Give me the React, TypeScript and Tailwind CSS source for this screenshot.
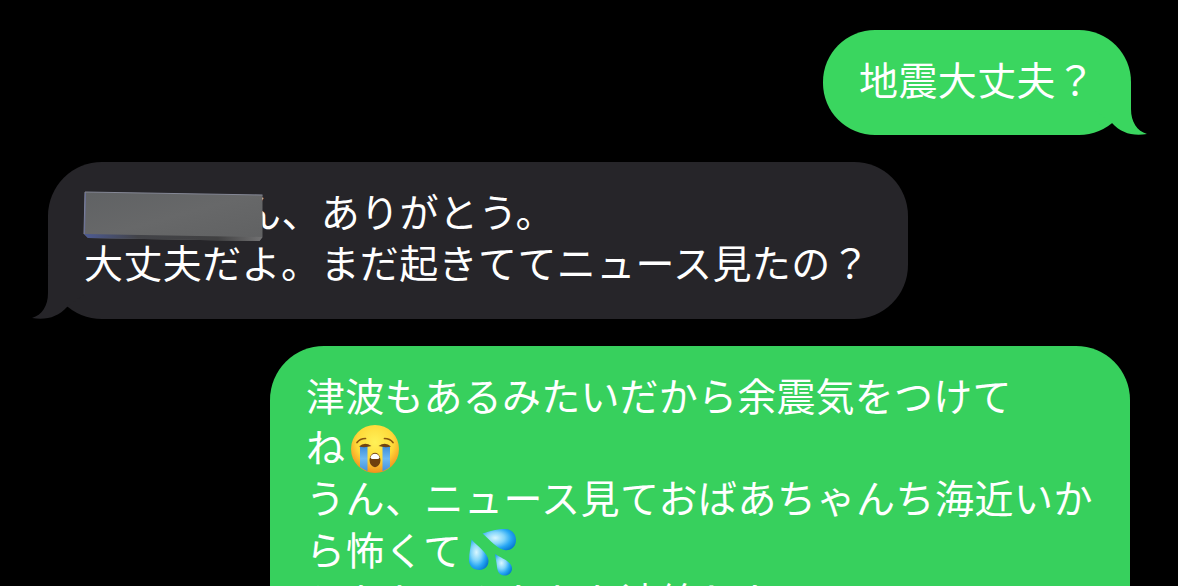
import React from 'react';

type Side = 'sent' | 'received';

interface BubbleProps {
  side: Side;
  tail?: boolean;
  className?: string;
  children: React.ReactNode;
}

const Tail = ({ side }: { side: Side }) => (
  <svg
    viewBox="0 0 54 53"
    className={`absolute bottom-0 w-[54px] h-[53px] ${side === 'sent' ? '-right-4 text-[#3ad65f]' : '-left-4 -scale-x-100 text-[#262529]'}`}
    fill="currentColor"
  >
    <path d="M0 0H38V27C38 40 44 49 54 52C40 54.500 28 51 19 41L0 27Z" />
  </svg>
);

const Line = ({ className = '', children }: { className?: string; children: React.ReactNode }) => (
  <div className={`flex items-center h-[51.2px] whitespace-nowrap ${className}`}>{children}</div>
);

const Bubble = ({ side, tail, className = '', children }: BubbleProps) => (
  <div className={`relative shrink-0 pl-9 text-white ${side === 'sent' ? 'self-end' : 'self-start'} ${className}`}>
    {tail && <Tail side={side} />}
    <div className="relative">{children}</div>
  </div>
);

const CryingFace = () => (
  <svg viewBox="0 0 50 50" className="w-[50px] h-[50px] ml-[5px] mt-[7px] shrink-0">
    <defs>
      <radialGradient id="face" cx="50%" cy="36%" r="64%">
        <stop offset="0" stopColor="#fff158" />
        <stop offset=".6" stopColor="#ffd939" />
        <stop offset="1" stopColor="#f18f1d" />
      </radialGradient>
      <linearGradient id="tear" x1="0" y1="0" x2="0" y2="1">
        <stop offset="0" stopColor="#3c8cda" />
        <stop offset=".5" stopColor="#6eb9f2" />
        <stop offset="1" stopColor="#4292dd" />
      </linearGradient>
    </defs>
    <circle cx="25" cy="25" r="24" fill="url(#face)" />
    <path d="M10 22H17.500V47.300Q13.500 45.500 10 43ZM32.500 22H40V43Q37 45.500 32.500 47.300Z" fill="url(#tear)" />
    <path d="M7 18.500Q10 14.500 15.500 14.500M34.500 14.500Q40 14.500 43 18.500" fill="none" stroke="#8a560f" strokeWidth="1.700" strokeLinecap="round" />
    <path d="M9 22.500Q14.500 17.500 21.500 22Q15 24 9 22.500ZM28.500 22Q35.500 17.500 41 22.500Q35 24 28.500 22Z" fill="#714413" />
    <ellipse cx="25" cy="36" rx="5.500" ry="7.200" fill="#70400e" />
    <path d="M20.500 33.500Q21.500 29.800 25 29.800T29.500 33.500Q29 35 27.500 35H22.500Q21 35 20.500 33.500Z" fill="#fff" />
  </svg>
);

const Droplets = () => (
  <svg viewBox="0 0 50 50" className="w-[50px] h-[50px] ml-[6px] mt-[9px] shrink-0">
    <defs>
      <radialGradient id="drop" cx="38%" cy="42%" r="68%">
        <stop offset="0" stopColor="#d9f7ff" />
        <stop offset=".4" stopColor="#83d5fa" />
        <stop offset=".7" stopColor="#27a7f4" />
        <stop offset="1" stopColor="#0779d2" />
      </radialGradient>
    </defs>
    <path d="M14.500 5.500C22 3 31 .8 37 1C44 1.200 48 6 48 12C48 18.500 43.500 22.500 37.500 22.200C29.500 21.500 22 12 14.500 5.500Z" fill="url(#drop)" />
    <path d="M3.500 11.500C9 18 20.500 25 20.500 33C20.500 38.500 16.500 42 11.500 42C5 42 1 38 1 32C1 25 3 18 3.500 11.500Z" fill="url(#drop)" />
    <path d="M27 26C33 30 44 33.500 44 40.500C44 44.500 41 47.500 36.500 47.500C31.500 47.500 29.500 43.500 29 39C28.600 34 27.500 30 27 26Z" fill="url(#drop)" />
  </svg>
);

// Slanted tape covering the name
const Redaction = () => (
  <svg viewBox="0 0 180 50" className="absolute -left-px top-[6px] w-[180px] h-[50px]">
    <defs>
      <linearGradient id="tape" x1="0" y1="0" x2="1" y2="1">
        <stop offset="0" stopColor="#606264" />
        <stop offset=".5" stopColor="#676869" />
        <stop offset="1" stopColor="#606162" />
      </linearGradient>
      <linearGradient id="tapeEdge" x1="0" y1="0" x2="1" y2="0">
        <stop offset="0" stopColor="#4d5b94" />
        <stop offset=".3" stopColor="#424348" />
        <stop offset=".75" stopColor="#414142" />
        <stop offset="1" stopColor="#727273" />
      </linearGradient>
    </defs>
    <path d="M2 1L179.500 4V46L176.500 50L5 47L1 43Z" fill="url(#tape)" />
    <path d="M1 43L179.500 46L176.500 50L5 47Z" fill="url(#tapeEdge)" />
    <path d="M1 43L2 1L179.500 4" fill="none" stroke="#858896" strokeWidth="1" />
    <path d="M1.500 43L2.500 2" fill="none" stroke="#6870a0" strokeWidth=".8" />
  </svg>
);

export default function App() {
  return (
    <main className="w-[1178px] h-[586px] overflow-hidden bg-black pt-[30px] px-12 flex flex-col gap-[27px] font-['Noto_Sans_CJK_JP',sans-serif] text-[39px] tracking-[0.4px] leading-[51px]">
      <Bubble side="sent" tail className="w-[308px] h-[105px] rounded-[52px] bg-[#3ad65f] pt-[23px] -mr-px">
        <Line>地震大丈夫？</Line>
      </Bubble>

      <Bubble side="received" tail className="w-[860px] h-[157px] rounded-[54px] bg-[#262529] pt-[23px]">
        <div className="relative pl-[158px]">
          <Line>ん、ありがとう。</Line>
          <Redaction />
        </div>
        <Line>大丈夫だよ。まだ起きててニュース見たの？</Line>
      </Bubble>

      <Bubble side="sent" className="w-[860px] h-[360px] rounded-[54px] bg-[#37d05d] pt-[23px]">
        <Line className="tracking-[0.2px]">津波もあるみたいだから余震気をつけて</Line>
        <Line>ね<CryingFace /></Line>
        <Line className="tracking-[0.5px]">うん、ニュース見ておばあちゃんち海近いか</Line>
        <Line>ら怖くて<Droplets /></Line>
        <Line>ともちゃんたちも連絡したっての？</Line>
      </Bubble>
    </main>
  );
}
